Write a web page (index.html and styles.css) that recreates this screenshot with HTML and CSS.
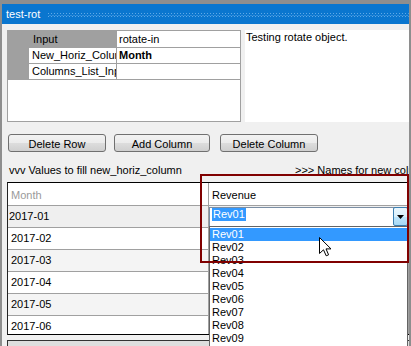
FILE: index.html
```html
<!DOCTYPE html>
<html>
<head>
<meta charset="utf-8">
<link rel="stylesheet" href="styles.css">
</head>
<body>
<div class="frame">
  <div class="titlebar">
    <span class="title">test-rot</span>
    <svg class="dots" xmlns="http://www.w3.org/2000/svg">
      <defs>
        <pattern id="dp" width="3" height="3" patternUnits="userSpaceOnUse">
          <rect x="0" y="0" width="1" height="1" fill="#5fa9e6"/>
          <rect x="1.5" y="2" width="1" height="1" fill="#5fa9e6"/>
        </pattern>
      </defs>
      <rect width="100%" height="100%" fill="url(#dp)"/>
    </svg>
  </div>
  <div class="content">
    <div class="top-row">
      <div class="propgrid">
        <div class="prow prow-first sel">
          <div class="pmargin"></div>
          <div class="plabel">Input</div>
          <div class="pvalue">rotate-in</div>
        </div>
        <div class="prow">
          <div class="pmargin"></div>
          <div class="plabel">New_Horiz_Column</div>
          <div class="pvalue bold">Month</div>
        </div>
        <div class="prow">
          <div class="pmargin"></div>
          <div class="plabel">Columns_List_Input</div>
          <div class="pvalue"></div>
        </div>
      </div>
      <div class="desc">Testing rotate object.</div>
    </div>
    <div class="buttons">
      <div class="btn btn-delrow">Delete Row</div>
      <div class="btn btn-addcol">Add Column</div>
      <div class="btn btn-delcol">Delete Column</div>
    </div>
    <div class="labels">
      <span class="lbl-left">vvv Values to fill new_horiz_column</span>
      <span class="lbl-right">&gt;&gt;&gt; Names for new columns</span>
    </div>
    <div class="datagrid">
      <div class="cell head muted">Month</div>
      <div class="cell head">Revenue</div>
      <div class="cell head"></div>

      <div class="cell r1 first-edit">2017-01</div>
      <div class="cell r1 combo-cell">
        <div class="combo">
          <span class="combo-text"><span class="hl">Rev01</span></span>
          <span class="combo-btn"><svg width="7" height="4" viewBox="0 0 7 4"><path d="M0 0H7L3.5 4Z" fill="#000"/></svg></span>
        </div>
      </div>
      <div class="cell r1"></div>

      <div class="cell">2017-02</div><div class="cell"></div><div class="cell"></div>
      <div class="cell alt">2017-03</div><div class="cell alt"></div><div class="cell alt"></div>
      <div class="cell">2017-04</div><div class="cell"></div><div class="cell"></div>
      <div class="cell alt">2017-05</div><div class="cell alt"></div><div class="cell alt"></div>
      <div class="cell">2017-06</div><div class="cell"></div><div class="cell"></div>
    </div>
    <div class="bottom-panel"></div>
  </div>

  <div class="droplist">
    <div class="item active">Rev01</div>
    <div class="item">Rev02</div>
    <div class="item">Rev03</div>
    <div class="item">Rev04</div>
    <div class="item">Rev05</div>
    <div class="item">Rev06</div>
    <div class="item">Rev07</div>
    <div class="item">Rev08</div>
    <div class="item">Rev09</div>
    <div class="item">Rev10</div>
  </div>

  <div class="highlight-box"></div>

  <svg class="cursor" width="13" height="20" viewBox="0 0 13 20" xmlns="http://www.w3.org/2000/svg">
    <path d="M0.5 0.5V16.5L4.5 12.8L7.2 18.8L9.6 17.8L7 11.9H12Z" fill="#fff" stroke="#000" stroke-width="1" stroke-linejoin="miter"/>
  </svg>
</div>
</body>
</html>
```

FILE: styles.css
```css
* { box-sizing: border-box; }
html, body {
  margin: 0;
  padding: 0;
  width: 411px;
  height: 346px;
  overflow: hidden;
  font-family: "Liberation Sans", Arial, sans-serif;
  font-size: 11px;
  color: #000;
}
.frame {
  position: relative;
  width: 411px;
  height: 346px;
  background: #f0f0f0;
  border-style: solid;
  border-color: #8e8e8e;
  border-width: 4px 2px 0 2px;
  overflow: hidden;
}
.titlebar {
  height: 20px;
  background: #0a76cf;
  display: flex;
  align-items: center;
  padding-left: 4px;
}
.title {
  color: #fff;
  font-size: 11px;
  line-height: 20px;
  white-space: nowrap;
}
.dots {
  flex: 1;
  height: 4px;
  margin-left: 8px;
  margin-top: 1px;
}
.content {
  padding: 6px 0 0 5px;
}
.top-row {
  display: flex;
  height: 92px;
}
.propgrid {
  width: 234px;
  height: 92px;
  background: #fff;
  border: 1px solid #a0a0a0;
  flex: none;
}
.prow {
  display: flex;
  height: 16px;
  line-height: 15px;
}
.prow-first {
  height: 17px;
  padding-top: 1px;
}
.pmargin {
  width: 21px;
  background: #a0a0a0;
  flex: none;
  margin-top: -1px;
}
.prow-first .pmargin { margin-top: -1px; }
.plabel {
  width: 88px;
  flex: none;
  padding-left: 3px;
  border-right: 1px solid #a0a0a0;
  border-bottom: 1px solid #a0a0a0;
  white-space: nowrap;
  overflow: hidden;
}
.prow-first .plabel, .prow-first .pvalue { margin-top: -1px; padding-top: 1px; }
.sel .plabel { background: #a0a0a0; padding-left: 4px; }
.pvalue {
  flex: 1;
  padding-left: 2px;
  border-bottom: 1px solid #a0a0a0;
  white-space: nowrap;
  overflow: hidden;
}
.bold { font-weight: bold; }
.desc {
  flex: 1;
  margin-left: 4px;
  background: #fff;
  padding: 1px 1px;
  line-height: 12px;
}
.buttons {
  display: flex;
  margin-top: 12px;
  padding-left: 1px;
  height: 18px;
}
.btn {
  height: 18px;
  border: 1px solid #707070;
  border-radius: 3px;
  background: linear-gradient(#f2f2f2, #ebebeb 50%, #dddddd 50%, #cfcfcf);
  text-align: center;
  line-height: 16px;
  padding-top: 1px;
  white-space: nowrap;
}
.btn-delrow { width: 98px; }
.btn-addcol { width: 96px; margin-left: 8px; }
.btn-delcol { width: 98px; margin-left: 10px; }
.labels {
  display: flex;
  margin-top: 10px;
  margin-bottom: 4px;
  height: 16px;
  line-height: 16px;
  padding-left: 2px;
  white-space: nowrap;
  overflow: hidden;
}
.lbl-left { width: 286px; flex: none; }
.lbl-right { flex: none; }
.datagrid {
  display: grid;
  grid-template-columns: 201px 200px 100px;
  grid-auto-rows: 22px;
  grid-template-rows: 23px;
  height: 153px;
  border-top: 1px solid #000;
  border-left: 1px solid #222;
  border-bottom: 1px solid #000;
  background: #fff;
  overflow: hidden;
}
.cell {
  border-right: 1px solid #a0a0a0;
  border-bottom: 1px solid #a0a0a0;
  padding-left: 3px;
  line-height: 21px;
  white-space: nowrap;
  overflow: hidden;
  background: #fff;
}
.head { line-height: 20px; padding-top: 2px; }
.muted { color: #9a9a9a; }
.r1 { background: #efefef; }
.alt { background: #f4f4f4; }
.first-edit { padding-left: 1px; }
.combo-cell { padding: 1px 0 0 0; overflow: visible; }
.combo {
  display: flex;
  width: 199px;
  height: 20px;
  border: 1px solid #7a8ea4;
  background: #fff;
}
.combo-text {
  flex: 1;
  padding-left: 2px;
  line-height: 13px;
}
.hl {
  display: inline-block;
  background: #3399ff;
  color: #fff;
  line-height: 13px;
  padding: 0 1px 0 1px;
}
.combo-btn {
  width: 15px;
  height: 19px;
  margin-top: 0;
  border: 1px solid #3c7fb1;
  border-radius: 2px;
  background: linear-gradient(#eaf6fd, #d9f0fc 50%, #bee6fd 50%, #a7d9f5);
  display: flex;
  align-items: center;
  justify-content: center;
  margin-right: -1px;
  margin-top: -1px;
}
.bottom-panel {
  margin-top: 5px;
  height: 20px;
  border-top: 1px solid #333;
  border-left: 1px solid #333;
  background: #dedede;
}
.droplist {
  position: absolute;
  left: 207px;
  top: 222px;
  width: 199px;
  height: 140px;
  background: #fff;
  border: 1px solid #646464;
  padding-top: 1px;
}
.item {
  height: 13px;
  line-height: 13px;
  padding-left: 2px;
  white-space: nowrap;
}
.item.active {
  background: #3399ff;
  color: #fff;
}
.highlight-box {
  position: absolute;
  left: 198px;
  top: 170px;
  width: 209px;
  height: 89px;
  border: 2px solid #800000;
}
.cursor {
  position: absolute;
  left: 317px;
  top: 233px;
}
```
